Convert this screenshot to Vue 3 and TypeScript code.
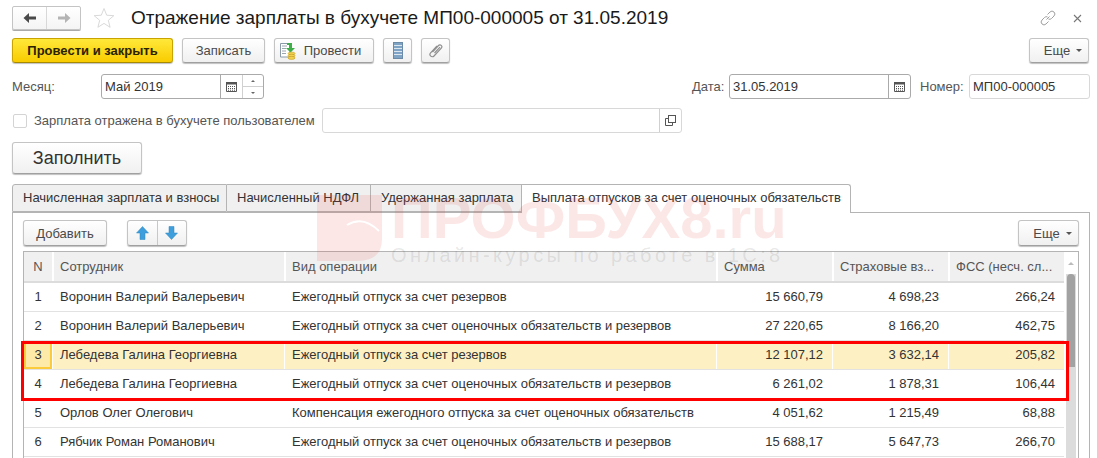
<script setup lang="ts">
interface Row { n: number; name: string; op: string; sum: string; ins: string; fss: string; cur?: boolean }
const A = 'Ежегодный отпуск за счет резервов'
const B = 'Ежегодный отпуск за счет оценочных обязательств и резервов'
const rows: Row[] = [
  { n: 1, name: 'Воронин Валерий Валерьевич', op: A, sum: '15 660,79', ins: '4 698,23', fss: '266,24' },
  { n: 2, name: 'Воронин Валерий Валерьевич', op: B, sum: '27 220,65', ins: '8 166,20', fss: '462,75' },
  { n: 3, name: 'Лебедева Галина Георгиевна', op: A, sum: '12 107,12', ins: '3 632,14', fss: '205,82', cur: true },
  { n: 4, name: 'Лебедева Галина Георгиевна', op: B, sum: '6 261,02', ins: '1 878,31', fss: '106,44' },
  { n: 5, name: 'Орлов Олег Олегович', op: 'Компенсация ежегодного отпуска за счет оценочных обязательств', sum: '4 051,62', ins: '1 215,49', fss: '68,88' },
  { n: 6, name: 'Рябчик Роман Романович', op: B, sum: '15 688,17', ins: '5 647,73', fss: '266,70' },
]
const tabs = ['Начисленная зарплата и взносы', 'Начисленный НДФЛ', 'Удержанная зарплата']
</script>

<template>
  <div class="page">
    <header class="titlebar">
      <div class="nav">
        <span class="nav-cell">
          <svg width="14" height="12" viewBox="0 0 14 12"><path d="M0.5 6 L6 1 V4.5 H13 V7.5 H6 V11 Z" fill="#4a4a4a"/></svg>
        </span>
        <span class="nav-cell">
          <svg width="14" height="12" viewBox="0 0 14 12"><path d="M13.5 6 L8 1 V4.5 H1 V7.5 H8 V11 Z" fill="#b4b4b4"/></svg>
        </span>
      </div>
      <svg class="star" width="22" height="22" viewBox="0 0 22 22"><path d="M11 1.5 L13.7 8.2 L20.8 8.7 L15.3 13.3 L17.1 20.3 L11 16.4 L4.9 20.3 L6.7 13.3 L1.2 8.7 L8.3 8.2 Z" fill="#fff" stroke="#cfcfcf" stroke-width=".8"/></svg>
      <h1>Отражение зарплаты в бухучете МП00-000005 от 31.05.2019</h1>
      <svg class="link" width="16" height="16" viewBox="0 0 16 16" fill="none" stroke="#a0a0a0" stroke-width="1"><path d="M6.5 9.5 L9.5 6.5"/><path d="M7.5 4.5 L10 2 a2.8 2.8 0 0 1 4 4 L11.5 8.5 a2.8 2.8 0 0 1-3 .6"/><path d="M8.5 11.5 L6 14 a2.8 2.8 0 0 1-4-4 L4.5 7.5 a2.8 2.8 0 0 1 3-.6"/></svg>
      <svg class="close" width="9" height="9" viewBox="0 0 9 9" stroke="#777" stroke-width="1.1"><path d="M1 1 L8 8 M8 1 L1 8"/></svg>
    </header>

    <div class="toolbar">
      <button class="btn primary">Провести и закрыть</button>
      <button class="btn w83">Записать</button>
      <button class="btn w100">
        <svg width="19" height="18" viewBox="0 0 19 18">
          <path d="M1.5 1.5 H11 V15 H1.5 Z" fill="#fff" stroke="#8a9aa8"/>
          <path d="M3 4 H8 M3 6.5 H7 M3 9 H7 M3 11.5 H7" stroke="#9aa6b0"/>
          <path d="M8 1 H13 V6 H16 L11.5 10.5 L7 6 H10 V3 H8 Z" fill="#3fae49"/>
          <ellipse cx="12.5" cy="11.5" rx="3.5" ry="1.5" fill="#f3d24f" stroke="#b8901c" stroke-width=".5"/>
          <ellipse cx="12.5" cy="13.7" rx="3.5" ry="1.5" fill="#f3d24f" stroke="#b8901c" stroke-width=".5"/>
          <ellipse cx="12.5" cy="15.9" rx="3.5" ry="1.5" fill="#f3d24f" stroke="#b8901c" stroke-width=".5"/>
        </svg>
        <span>Провести</span>
      </button>
      <button class="btn icon">
        <svg width="10" height="17" viewBox="0 0 10 17"><rect x=".5" y=".5" width="9" height="16" fill="#7ea3c4" stroke="#6a8aa8"/><path d="M1 3.5 H9 M1 6.5 H9 M1 9.5 H9 M1 12.5 H9" stroke="#dbe6ef" stroke-width="1"/></svg>
      </button>
      <button class="btn icon">
        <svg width="14" height="15" viewBox="0 0 14 15" fill="none" stroke="#8f8f8f" stroke-width="1.2"><path d="M3.5 9 L9.5 2.5 a1.9 1.9 0 0 1 2.8 2.6 L5 13 a2.3 2.3 0 0 1-3.4-3.1 L8 3"/><path d="M5.5 10 L11 4.2"/></svg>
      </button>
      <button class="btn more top-more">Еще <i class="caret"></i></button>
    </div>

    <div class="form-row month-row">
      <label class="lbl month-lbl">Месяц:</label>
      <div class="field month">
        <span class="value">Май 2019</span>
        <span class="addon">
          <svg width="11" height="11" viewBox="0 0 11 11"><path d="M.5 1.5 H10.5 V10.5 H.5 Z" fill="#fff" stroke="#555"/><rect x="0" y="1" width="11" height="2.5" fill="#555"/><path d="M2 5.5 H9 M2 7.5 H9 M2 9.2 H9" stroke="#555" stroke-dasharray="1 1"/></svg>
        </span>
        <span class="spin">
          <span><i class="tri up"></i></span>
          <span><i class="tri down"></i></span>
        </span>
      </div>
      <label class="lbl date-lbl">Дата:</label>
      <div class="field date">
        <span class="value">31.05.2019</span>
        <span class="addon">
          <svg width="11" height="11" viewBox="0 0 11 11"><path d="M.5 1.5 H10.5 V10.5 H.5 Z" fill="#fff" stroke="#555"/><rect x="0" y="1" width="11" height="2.5" fill="#555"/><path d="M2 5.5 H9 M2 7.5 H9 M2 9.2 H9" stroke="#555" stroke-dasharray="1 1"/></svg>
        </span>
      </div>
      <label class="lbl num-lbl">Номер:</label>
      <div class="field number soft"><span class="value">МП00-000005</span></div>
    </div>

    <div class="form-row check-row">
      <span class="check"></span>
      <label class="lbl check-lbl">Зарплата отражена в бухучете пользователем</label>
      <div class="field user soft">
        <span class="value"></span>
        <span class="addon soft-addon">
          <svg width="11" height="11" viewBox="0 0 11 11" fill="none" stroke="#555"><rect x="3.5" y=".5" width="7" height="7" fill="#fff"/><path d="M3.5 3.5 H.5 V10.5 H7.5 V7.5"/></svg>
        </span>
      </div>
    </div>

    <button class="btn fill">Заполнить</button>

    <div class="tabs">
      <span v-for="t in tabs" :key="t" class="tab">{{ t }}</span>
      <span class="tab active">Выплата отпусков за счет оценочных обязательств</span>
    </div>

    <section class="panel">
      <div class="panel-bar">
        <button class="btn add">Добавить</button>
        <div class="arrows">
          <span class="arrow">
            <svg width="13" height="14" viewBox="0 0 13 14"><path d="M6.5 .5 L12.5 7 H9 V13.5 H4 V7 H.5 Z" fill="#3f9fdc" stroke="#2f86c0" stroke-width=".5"/></svg>
          </span>
          <span class="arrow">
            <svg width="13" height="14" viewBox="0 0 13 14"><path d="M6.5 13.5 L12.5 7 H9 V.5 H4 V7 H.5 Z" fill="#3f9fdc" stroke="#2f86c0" stroke-width=".5"/></svg>
          </span>
        </div>
        <button class="btn more panel-more">Еще <i class="caret"></i></button>
      </div>

      <div class="table">
        <div class="tbody">
          <div class="thead grid">
            <span class="c-n">N</span>
            <span>Сотрудник</span>
            <span>Вид операции</span>
            <span>Сумма</span>
            <span>Страховые вз...</span>
            <span>ФСС (несч. сл...</span>
          </div>
          <div v-for="r in rows" :key="r.n" class="row grid" :class="{ cur: r.cur }">
            <span class="c-n num-cell">{{ r.n }}</span>
            <span>{{ r.name }}</span>
            <span>{{ r.op }}</span>
            <span class="r">{{ r.sum }}</span>
            <span class="r">{{ r.ins }}</span>
            <span class="r">{{ r.fss }}</span>
          </div>
        </div>
        <div class="scroll">
          <i class="tri up grey"></i>
          <div class="track"><div class="thumb"></div></div>
        </div>
      </div>
    </section>

    <div class="highlight"></div>

    <div class="watermark" aria-hidden="true">
      <div class="wm-logo">
        <svg width="65" height="66" viewBox="0 0 65 66"><path d="M0 0 H65 V44 Q65 66 40 66 H0 Z" fill="#e43c3c" fill-opacity=".13"/><path d="M30 30 Q46 20 62 36" fill="none" stroke="#fff" stroke-width="2"/></svg>
      </div>
      <div class="wm-big">ПРОФБУХ8.ru</div>
      <div class="wm-small">Онлайн-курсы по работе в 1С:8</div>
    </div>
  </div>
</template>

<style>
html, body { margin: 0; background: #fff; }
</style>

<style scoped>
.page {
  position: relative;
  width: 1097px;
  height: 458px;
  overflow: hidden;
  background: #fff;
  font: 13px "Liberation Sans", Arial, sans-serif;
  color: #333;
}
.titlebar { display: flex; align-items: center; height: 28px; padding: 4px 0 0 12px; box-sizing: content-box; }
.nav { display: flex; width: 69px; height: 24px; box-sizing: border-box; border: 1px solid #c4c4c4; border-radius: 2px; background: linear-gradient(#fff, #f4f4f4); box-shadow: 0 1px 0 #aaa; }
.nav-cell { flex: 1; display: flex; align-items: center; justify-content: center; }
.nav-cell + .nav-cell { border-left: 1px solid #d8d8d8; }
.star { margin-left: 12px; }
h1 { margin: 0 0 0 16px; font: 400 19px "Liberation Sans", Arial, sans-serif; color: #1a1a1a; flex: 1; white-space: nowrap; }
.link { margin-right: 17px; }
.close { margin-right: 15px; }

.btn { box-sizing: border-box; height: 25px; padding: 0; border: 1px solid #c4c4c4; border-bottom-color: #a0a0a0; border-radius: 3px; background: linear-gradient(#fff, #f0f0f0); box-shadow: 0 1px 1px #c0c0c0; font: 13px "Liberation Sans", Arial, sans-serif; color: #4a4a4a; display: inline-flex; align-items: center; justify-content: center; gap: 6px; }
.toolbar { display: flex; gap: 9px; padding: 6px 8px 0 12px; height: 25px; }
.primary { width: 161px; font-weight: 700; color: #2a2200; border-color: #c9a400; border-bottom-color: #a88a00; background: linear-gradient(#ffe83a, #f9cc00); }
.w83 { width: 83px; }
.w100 { width: 100px; padding-right: 8px; }
.icon { width: 29px; }
.more { width: 60px; gap: 6px; padding-left: 8px; }
.top-more { margin-left: auto; }
.caret { width: 0; height: 0; border: 3px solid transparent; border-top: 3px solid #555; border-bottom: 0; }

.form-row { display: flex; align-items: center; padding-left: 12px; }
.month-row { height: 25px; margin-top: 11px; }
.check-row { height: 25px; margin-top: 9px; }
.lbl { color: #555; white-space: nowrap; }
.month-lbl { width: 89px; }
.date-lbl { margin-left: 428px; width: 37px; }
.num-lbl { margin-left: 9px; width: 49px; }
.field { display: flex; box-sizing: border-box; height: 25px; border: 1px solid #aaa; border-radius: 3px; background: #fff; }
.field.soft { border-color: #d8d8d8; }
.value { flex: 1; padding: 0 3px; line-height: 23px; color: #333; white-space: nowrap; }
.addon { width: 21px; border-left: 1px solid #aaa; display: flex; align-items: center; justify-content: center; }
.soft-addon { border-left-color: #d0d0d0; }
.month { width: 163px; }
.date { width: 182px; }
.number { width: 121px; }
.user { width: 360px; margin-left: 7px; }
.spin { width: 20px; display: flex; flex-direction: column; border-left: 1px solid #d0d0d0; }
.spin span { flex: 1; display: flex; align-items: center; justify-content: center; }
.spin span + span { border-top: 1px solid #d0d0d0; }
.tri { width: 0; height: 0; border-left: 2px solid transparent; border-right: 2px solid transparent; display: block; }
.tri.up { border-bottom: 2px solid #666; }
.tri.down { border-top: 2px solid #666; }
.check { width: 14px; height: 14px; box-sizing: border-box; border: 1px solid #d4d4d4; border-radius: 2px; margin: 0 7px 0 1px; }

.fill { display: flex; width: 130px; height: 32px; margin: 9px 0 0 12px; font-size: 18px; color: #333; }

.tabs { display: flex; height: 28px; padding-left: 12px; margin-top: 10px; position: relative; z-index: 1; }
.tab { box-sizing: border-box; height: 28px; padding: 0 10px; line-height: 26px; background: #f0f0f0; border: 1px solid #b4b4b4; border-left-width: 0; color: #333; white-space: nowrap; }
.tab:first-child { border-left-width: 1px; border-top-left-radius: 3px; width: 215px; }
.tab:nth-child(2) { width: 144px; }
.tab:nth-child(3) { width: 151px; }
.tab.active { width: 329px; height: 29px; background: #fff; border-bottom: 0; border-top-right-radius: 3px; }

.panel { box-sizing: border-box; margin: 0 7px 0 12px; height: 246px; border: 1px solid #b4b4b4; border-bottom: 0; padding: 7px 10px 0; }
.panel-bar { display: flex; height: 26px; }
.add { width: 84px; height: 26px; }
.arrows { display: flex; width: 60px; height: 26px; margin-left: 20px; box-sizing: border-box; border: 1px solid #c4c4c4; border-bottom-color: #a0a0a0; border-radius: 3px; background: linear-gradient(#fff, #f0f0f0); box-shadow: 0 1px 1px #c0c0c0; }
.arrow { flex: 1; display: flex; align-items: center; justify-content: center; }
.arrow + .arrow { border-left: 1px solid #c8c8c8; }
.panel-more { margin-left: auto; width: 61px; height: 26px; }

.table { display: flex; box-sizing: border-box; margin-top: 5px; width: 1056px; height: 220px; border: 1px solid #b4b4b4; border-bottom: 0; }
.tbody { width: 1040px; flex: none; }
.grid { display: grid; grid-template-columns: 28px 232px 432px 116px 116px 116px; }
.grid > span { box-sizing: border-box; padding: 0 8px; white-space: nowrap; overflow: hidden; }
.thead { height: 29px; background: #f0f0f0; border-bottom: 2px solid #dcdcdc; color: #555; line-height: 29px; box-sizing: content-box; }
.thead > span + span { box-shadow: inset 2px 0 0 #fff; }
.row { box-sizing: border-box; height: 29px; line-height: 28px; border-bottom: 1px solid #e2e2e2; color: #333; }
.row.cur { background: #fdf1c4; }
.row.cur > span + span { box-shadow: inset 1px 0 0 #fff; }
.c-n { text-align: center; padding: 0 !important; }
.r { text-align: right; padding-right: 9px !important; }
.num-cell { position: relative; }
.cur .num-cell { box-shadow: inset 0 0 0 2px #fbcb3c; background: #fde9a8; }
.scroll { flex: 1; background: #fff; position: relative; }
.tri.grey { position: absolute; top: 10px; left: 4px; border-bottom-color: #bbb; border-left-width: 3px; border-right-width: 3px; border-bottom-width: 3px; }
.track { position: absolute; top: 22px; bottom: 0; left: 2px; width: 10px; background: #dcdcdc; }
.thumb { margin-left: 1px; width: 8px; height: 93px; border-radius: 4px 4px 0 0; background: #a2a2a2; }

.highlight { position: absolute; left: 21px; top: 341px; width: 1048px; height: 60px; box-sizing: border-box; border: 3px solid #f00; pointer-events: none; z-index: 2; }

.watermark { position: absolute; left: 317px; top: 195px; width: 480px; height: 80px; pointer-events: none; z-index: 2; }
.wm-logo { position: absolute; left: 0; top: 0; width: 65px; height: 66px; line-height: 0; }
.wm-big { position: absolute; left: 74px; top: -6px; font: 700 58px "Liberation Sans", Arial, sans-serif; color: rgba(228, 60, 60, 0.12); white-space: nowrap; line-height: 58px; }
.wm-small { position: absolute; left: 74px; top: 49px; font: 400 20px "Liberation Sans", Arial, sans-serif; letter-spacing: 3.4px; color: rgba(90, 90, 90, 0.14); white-space: nowrap; }
</style>
